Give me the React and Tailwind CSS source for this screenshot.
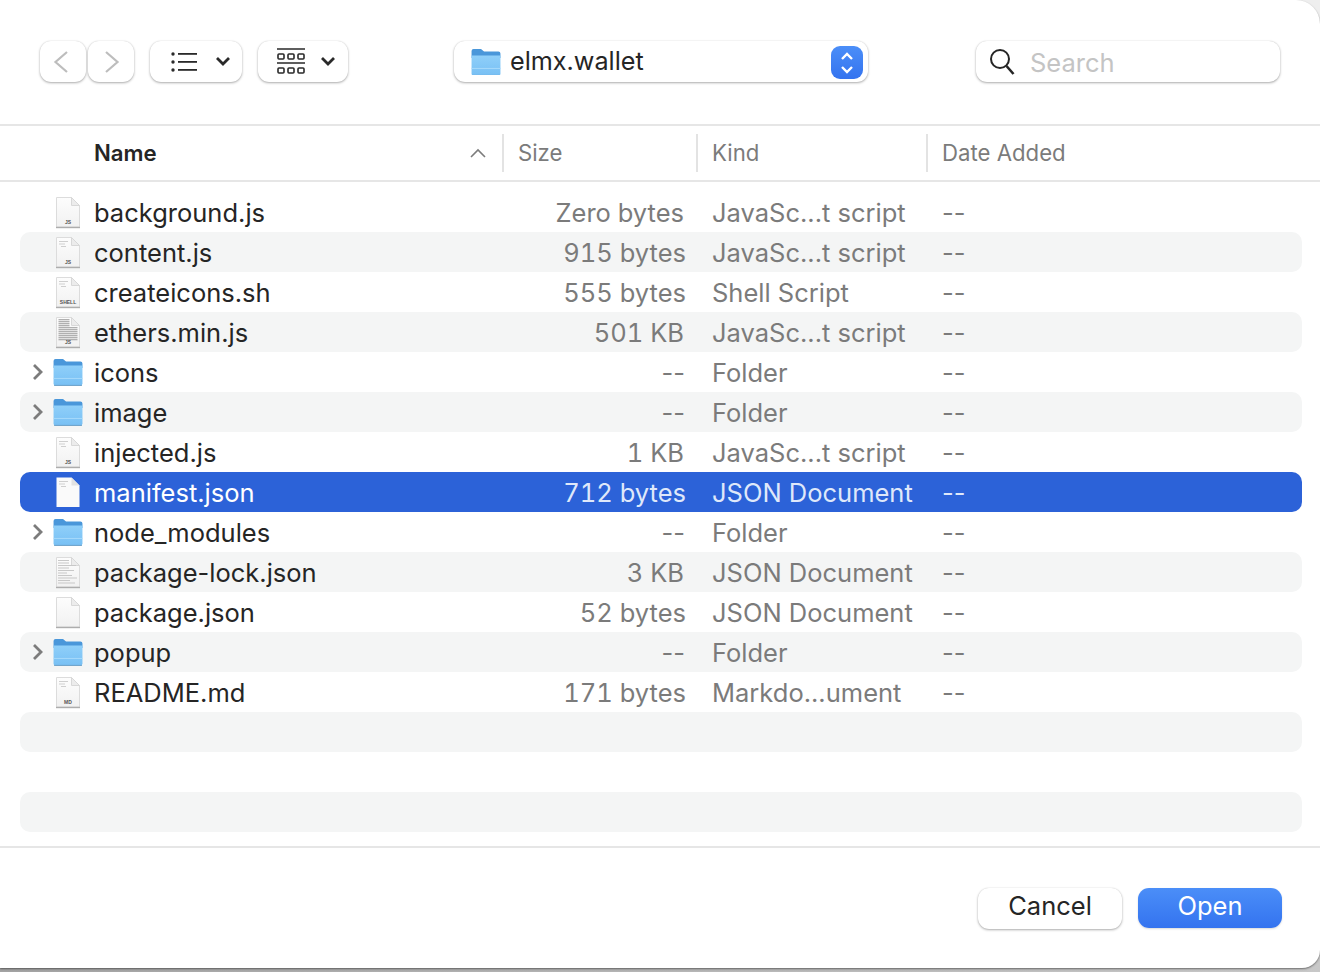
import React from "react";

const Folder = ({ w = 30 }) => (
  <svg width={w} height={w * 0.93} viewBox="0 0 30 28">
    <defs>
      <linearGradient id="fb" x1="0" y1="0" x2="0" y2="1">
        <stop offset="0" stopColor="#8fcff9" />
        <stop offset="1" stopColor="#78c0f4" />
      </linearGradient>
    </defs>
    <path d="M0.5 3a2 2 0 0 1 2-2h7.5l3 2.6h14.5a2 2 0 0 1 2 2V10H.5z" fill="#4a97da" />
    <path d="M.5 7.5h29V25.5a2 2 0 0 1-2 2h-25a2 2 0 0 1-2-2z" fill="url(#fb)" />
    <rect x=".5" y="20" width="29" height="1" fill="#a8d9fa" />
    <rect x="1" y="27" width="28" height="1" fill="#6b9fc6" />
  </svg>
);

const Doc = ({ label, kind, sel }) => (
  <svg width="26" height="33" viewBox="0 0 26 33">
    <defs>
      <linearGradient id="dg" x1="0" y1="0" x2="0" y2="1">
        <stop offset="0" stopColor="#fdfdfd" />
        <stop offset="1" stopColor="#f1f1f1" />
      </linearGradient>
    </defs>
    <path d="M1.5 1.5h15l8 8v21.5h-23z" fill={sel ? "#fafafa" : "url(#dg)"} stroke={sel ? "none" : "#dcdcdc"} strokeWidth="1" />
    <path d="M16.5 1.5v8h8z" fill={sel ? "#e2e2e2" : "#ececec"} stroke={sel ? "none" : "#d8d8d8"} strokeWidth="1" />
    {!sel && <rect x="1" y="30.8" width="24" height="1.4" fill="#adadad" />}
    {kind === "small" && (
      <g fill="#cfcfcf">
        <rect x="4" y="5" width="9" height="1" />
        <rect x="4" y="7.5" width="6" height="1" />
        <rect x="6" y="10" width="5" height="1" />
      </g>
    )}
    {kind === "dense" && (
      <g fill="#b0b0b0">
        {[3, 5, 7, 9, 11, 13, 15, 17, 19, 21, 23].map((y) => (
          <rect key={y} x="3.5" y={y} width={y < 10 ? 11 : 19} height="1.3" />
        ))}
      </g>
    )}
    {kind === "lines" && (
      <g fill="#c8c8c8">
        {[4, 6.5, 9, 11.5, 14, 16.5, 19, 21.5, 24, 26.5].map((y, i) => (
          <rect key={y} x="3" y={y} width={i < 2 ? 11 : 8 + ((i * 5) % 12)} height="1" />
        ))}
      </g>
    )}
    {label && (
      <text x="13" y="27.5" textAnchor="middle" fontSize="5" fontWeight="700" fill="#555" fontFamily="Liberation Sans, sans-serif">
        {label}
      </text>
    )}
  </svg>
);

const rows = [
  { n: "background.js", s: "Zero bytes", k: "JavaSc...t script", d: "--", icon: "JS", nudge: true },
  { n: "content.js", s: "915 bytes", k: "JavaSc...t script", d: "--", icon: "JS", kind: "small" },
  { n: "createicons.sh", s: "555 bytes", k: "Shell Script", d: "--", icon: "SHELL", kind: "small" },
  { n: "ethers.min.js", s: "501 KB", k: "JavaSc...t script", d: "--", icon: "JS", kind: "dense", nudge: true },
  { n: "icons", s: "--", k: "Folder", d: "--", folder: true },
  { n: "image", s: "--", k: "Folder", d: "--", folder: true },
  { n: "injected.js", s: "1 KB", k: "JavaSc...t script", d: "--", icon: "JS", kind: "small", nudge: true },
  { n: "manifest.json", s: "712 bytes", k: "JSON Document", d: "--", kind: "small", sel: true },
  { n: "node_modules", s: "--", k: "Folder", d: "--", folder: true },
  { n: "package-lock.json", s: "3 KB", k: "JSON Document", d: "--", kind: "lines", nudge: true },
  { n: "package.json", s: "52 bytes", k: "JSON Document", d: "--" },
  { n: "popup", s: "--", k: "Folder", d: "--", folder: true },
  { n: "README.md", s: "171 bytes", k: "Markdo...ument", d: "--", icon: "MD", kind: "small" },
];

const Row = ({ r, i }) => {
  const alt = i % 2 === 1;
  const bg = r.sel ? "bg-[#2c62d8]" : alt ? "bg-[#f4f5f5]" : "";
  const nameC = r.sel ? "text-white" : "text-[#252525]";
  const subC = r.sel ? "text-[#dfe8fa]" : "text-[#7b7b7b]";
  const sizeX = r.folder ? "pr-[1px]" : r.nudge ? "pr-[2px] tabular-nums" : "tabular-nums";
  return (
    <div className={`ml-5 mr-[18px] h-10 flex items-center rounded-[10px] text-[25.5px] leading-10 ${bg}`}>
      <div className="w-[74px] shrink-0 flex items-center">
        <div className="w-[33px] flex justify-end pr-[9px]">
          {r.folder && (
            <svg width="12" height="18" viewBox="0 0 12 18">
              <path d="M2 2l7 7-7 7" fill="none" stroke="#7c7c7c" strokeWidth="2.8" />
            </svg>
          )}
        </div>
        {r.folder ? (
          <Folder />
        ) : (
          <div className="ml-[2px] flex">
            <Doc label={r.icon} kind={r.kind} sel={r.sel} />
          </div>
        )}
      </div>
      <div className={`w-[408px] shrink-0 pt-[2px] ${nameC}`}>{r.n}</div>
      <div className={`w-[184px] shrink-0 text-right pt-[2px] ${sizeX} ${subC}`}>{r.s}</div>
      <div className={`w-[256px] shrink-0 pl-[26px] pt-[2px] ${subC}`}>{r.k}</div>
      <div className={`pt-[2px] ${subC}`}>{r.d}</div>
    </div>
  );
};

const Btn = ({ className = "", children }) => (
  <div className={`h-[41px] flex items-center bg-white rounded-[11px] shadow-[0_1px_2.5px_rgba(0,0,0,0.32),0_0_1px_rgba(0,0,0,0.15)] ${className}`}>
    {children}
  </div>
);

const Chevron = () => (
  <svg width="16" height="11" viewBox="0 0 16 11">
    <path d="M2 2l6 6 6-6" fill="none" stroke="#2a2a2a" strokeWidth="2.8" />
  </svg>
);

export default function App() {
  return (
    <div
      className="w-[1320px] h-[972px] overflow-hidden [background:linear-gradient(to_right,#a3a3a3,#c8c8c8)_bottom/100%_30px_no-repeat,#eeeeee]"
      style={{ fontFamily: "Inter, 'Liberation Sans', sans-serif" }}
    >
      <div className="h-[968px] bg-white rounded-tr-[24px] rounded-br-[18px] shadow-[0_1px_2px_rgba(0,0,0,0.45)] flex flex-col">
        <header className="h-[124px] shrink-0 flex items-start pt-[41px] pl-10">
          <Btn className="w-[46px] pl-[13px]">
            <svg width="16" height="24" viewBox="0 0 16 24">
              <path d="M14 2L2.5 12 14 22" fill="none" stroke="#bdbdbd" strokeWidth="2.2" />
            </svg>
          </Btn>
          <Btn className="w-[46px] ml-[2px] pl-[16px]">
            <svg width="16" height="24" viewBox="0 0 16 24">
              <path d="M2 2l11.5 10L2 22" fill="none" stroke="#bdbdbd" strokeWidth="2.2" />
            </svg>
          </Btn>
          <Btn className="w-[92px] ml-[16px] pl-[20px] gap-[17px]">
            <svg width="28" height="22" viewBox="0 0 28 22">
              <g fill="#2a2a2a">
                <circle cx="3" cy="3" r="1.7" />
                <circle cx="3" cy="11" r="1.7" />
                <circle cx="3" cy="19" r="1.7" />
                <rect x="8" y="2" width="19" height="1.8" />
                <rect x="8" y="10" width="19" height="1.8" />
                <rect x="8" y="18" width="19" height="1.8" />
              </g>
            </svg>
            <Chevron />
          </Btn>
          <Btn className="w-[90px] ml-[16px] pl-[19px] gap-[15px]">
            <svg width="28" height="28" viewBox="0 0 28 28" fill="none" stroke="#2a2a2a">
              <path d="M0 1h28M0 15h28" strokeWidth="1.6" />
              <g strokeWidth="1.6">
                {[1, 11, 21].map((x) => (
                  <React.Fragment key={x}>
                    <rect x={x} y="6" width="6" height="5" rx="1" />
                    <rect x={x} y="20" width="6" height="5" rx="1" />
                  </React.Fragment>
                ))}
              </g>
            </svg>
            <Chevron />
          </Btn>
          <Btn className="w-[414px] ml-[106px] pl-[17px] relative">
            <Folder />
            <span className="ml-[9px] text-[25.2px] text-[#252525]">elmx.wallet</span>
            <div className="absolute right-[5px] top-[5px] w-[32px] h-[33px] rounded-[9px] bg-gradient-to-b from-[#4b8ef8] to-[#3473ef] flex items-center justify-center">
              <svg width="16" height="28" viewBox="0 0 16 28">
                <path d="M3 10l5-5 5 5M3 18l5 5 5-5" fill="none" stroke="#fff" strokeWidth="2.4" />
              </svg>
            </div>
          </Btn>
          <Btn className="w-[304px] ml-[108px] pl-[13px] gap-[14px]">
            <svg width="27" height="28" viewBox="0 0 27 28" fill="none" stroke="#252525">
              <circle cx="11" cy="11" r="9" strokeWidth="2" />
              <path d="M17.5 18l7 8" strokeWidth="2.6" />
            </svg>
            <span className="text-[25.5px] text-[#c4c4c4] pt-[4px]">Search</span>
          </Btn>
        </header>

        <div className="h-[58px] shrink-0 border-y-2 border-[#e6e6e6] flex items-center text-[22.2px] text-[#7b7b7b]">
          <div className="w-[502px] shrink-0 flex items-center justify-between pl-[94px] pr-[16px]">
            <span className="font-semibold text-[#252525]">Name</span>
            <svg width="16" height="10" viewBox="0 0 16 10">
              <path d="M1 9l7-7 7 7" fill="none" stroke="#7c7c7c" strokeWidth="1.6" />
            </svg>
          </div>
          <div className="w-[194px] h-[38px] flex items-center shrink-0 border-l-2 border-[#e3e3e3] pl-[14px]">Size</div>
          <div className="w-[230px] h-[38px] flex items-center shrink-0 border-l-2 border-[#e3e3e3] pl-[14px]">Kind</div>
          <div className="h-[38px] flex items-center border-l-2 border-[#e3e3e3] pl-[14px]">Date Added</div>
        </div>

        <main className="pt-[10px] h-[666px] shrink-0 border-b-2 border-[#e6e6e6]">
          {rows.map((r, i) => (
            <Row key={r.n} r={r} i={i} />
          ))}
          <div className="ml-5 mr-[18px] h-10 rounded-[10px] bg-[#f4f5f5]" />
          <div className="h-10" />
          <div className="ml-5 mr-[18px] h-10 rounded-[10px] bg-[#f4f5f5]" />
        </main>

        <footer className="flex-1 flex justify-end items-start pt-[40px] pr-[38px] gap-[16px] text-[25.5px]">
          <Btn className="w-[144px] h-[40px] justify-center pb-[4px] text-[#252525]">Cancel</Btn>
          <div className="w-[144px] h-[40px] pb-[4px] flex items-center justify-center rounded-[11px] text-white bg-gradient-to-b from-[#4b8ef8] to-[#3473ef] shadow-[0_1px_2px_rgba(0,0,0,0.15)]">
            Open
          </div>
        </footer>
      </div>
    </div>
  );
}
